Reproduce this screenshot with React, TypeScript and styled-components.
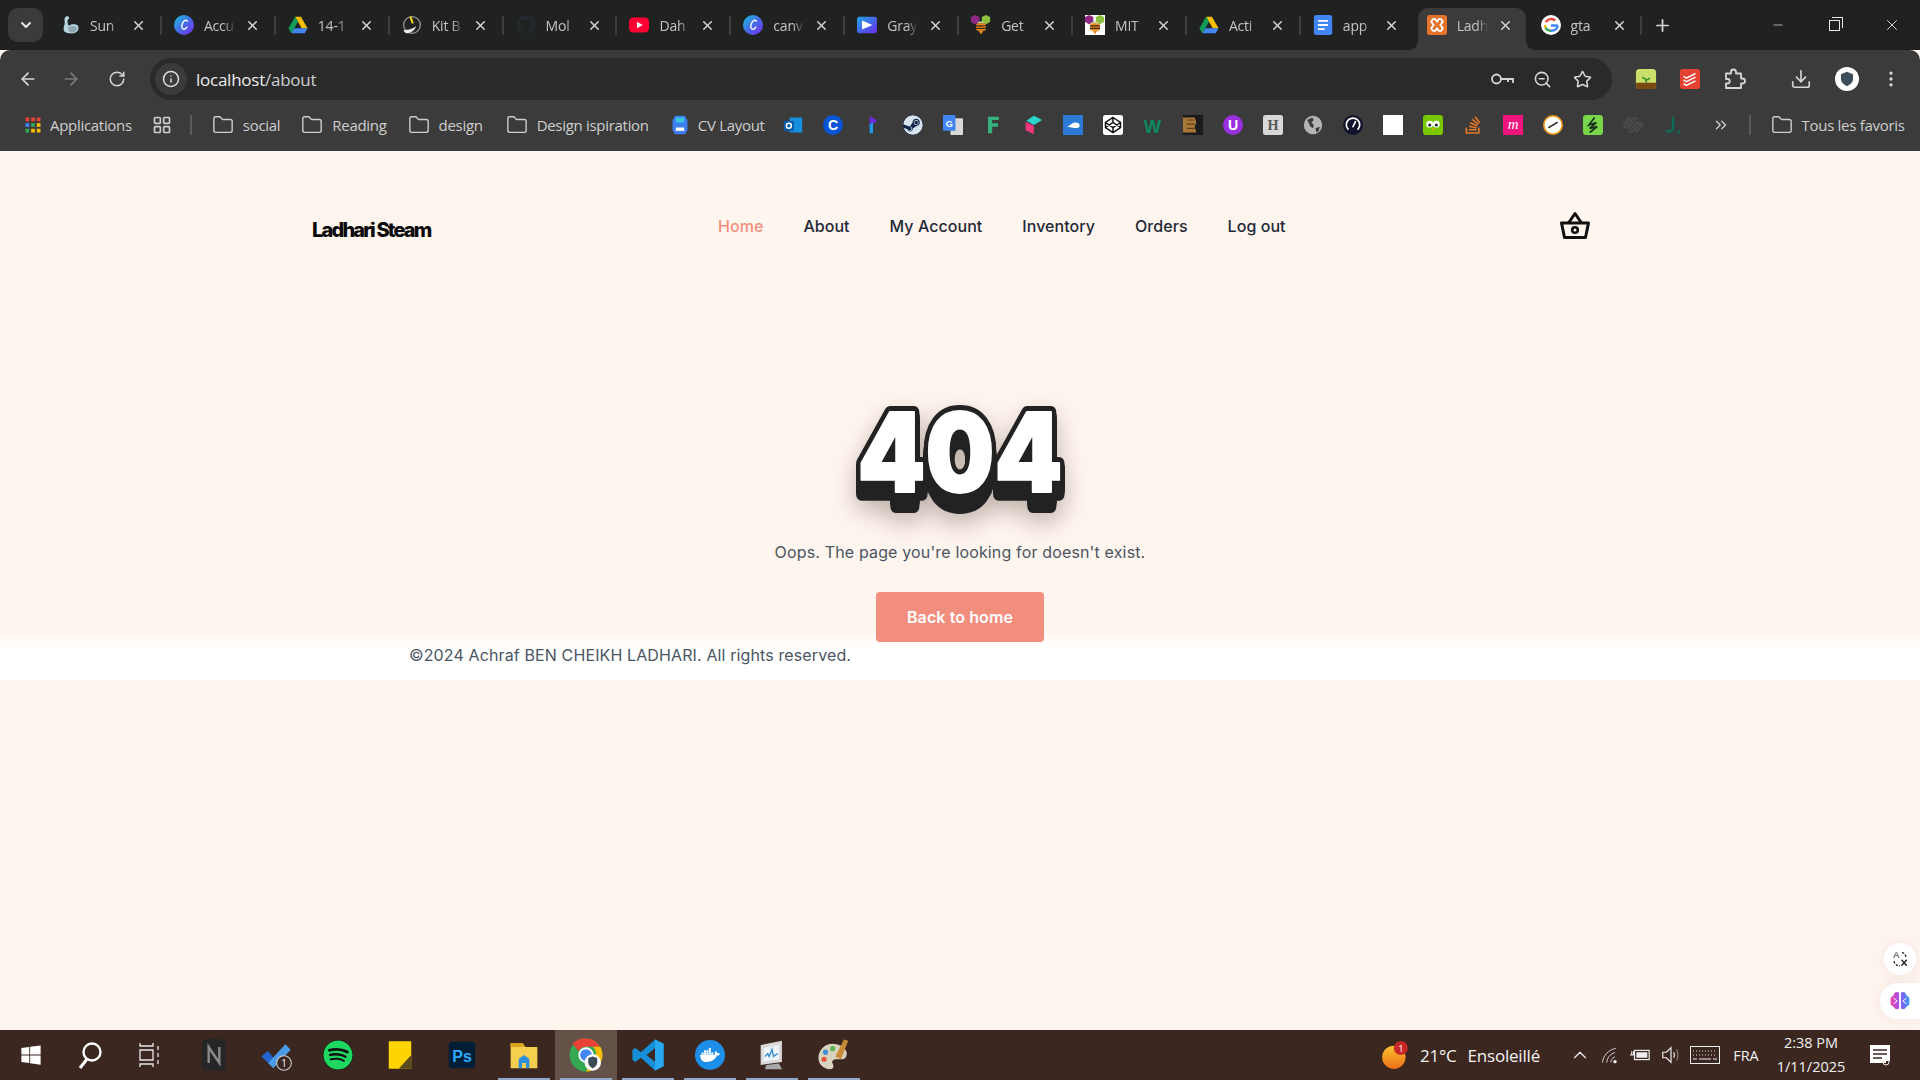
import { ReactNode } from "react";
import styled, { createGlobalStyle } from "styled-components";
import {
  ArrowLeft, ArrowRight, RotateCw, Info, ZoomOut, Star, Download,
  EllipsisVertical, Folder, Plus, X, Minus, ChevronDown, ChevronUp, LayoutGrid, ChevronsRight,
} from "lucide-react";
import { FaGithub, FaSteam, FaSpotify, FaDocker, FaStackOverflow, FaWindows, FaSquarespace } from "react-icons/fa";

const GlobalStyle = createGlobalStyle`
  html, body { margin: 0; padding: 0; height: 100%; background: #fff5ef; }
  #root { height: 100%; }
  * { box-sizing: border-box; }
`;

const uiFont = `"Open Sans", "Noto Sans", sans-serif`;
const pageFont = `Inter, "Liberation Sans", sans-serif`;

const Screen = styled.div`
  width: 1920px;
  height: 1080px;
  display: flex;
  flex-direction: column;
  overflow: hidden;
  position: relative;
  background: #fff5ef;
`;

/* browser chrome */
const TabStrip = styled.div`
  height: 50px;
  flex: none;
  background: #202221;
  display: flex;
  padding: 8px 0 0 8px;
  font-family: ${uiFont};
`;
const TabMenu = styled.div`
  width: 35px;
  height: 34px;
  margin-right: 5px;
  border-radius: 10px;
  background: #3b3b3b;
  color: #e6e6e6;
  display: flex;
  align-items: center;
  justify-content: center;
`;
const Tab = styled.div<{ $active?: boolean; $bare?: boolean }>`
  width: ${(p) => (p.$active ? 107.9 : 113.9)}px;
  height: 42px;
  margin: 0 ${(p) => (p.$active ? 3 : 0)}px;
  padding: 0 0 8px ${(p) => (p.$active ? 9 : 12)}px;
  flex: none;
  display: flex;
  align-items: center;
  position: relative;
  color: #c4c4c4;
  font-size: 14px;
  letter-spacing: -0.2px;
  background: ${(p) => (p.$active ? "#3b3b3b" : "transparent")};
  border-radius: 10px 10px 0 0;
  &::after {
    content: "";
    display: ${(p) => (p.$bare ? "none" : "block")};
    position: absolute;
    right: 0;
    top: 8px;
    width: 2px;
    height: 19px;
    background: #3d3d3d;
  }
  &::before {
    content: "";
    display: ${(p) => (p.$active ? "block" : "none")};
    position: absolute;
    left: -10px;
    right: -10px;
    bottom: 0;
    height: 10px;
    background:
      radial-gradient(circle at 0 0, #202221 10px, #3b3b3b 10.5px) left / 10px 10px no-repeat,
      radial-gradient(circle at 100% 0, #202221 10px, #3b3b3b 10.5px) right / 10px 10px no-repeat;
  }
`;
const TabTitle = styled.span`
  width: 33px;
  margin-left: 10px;
  white-space: nowrap;
  -webkit-mask-image: linear-gradient(90deg, #000 60%, transparent 95%);
  mask-image: linear-gradient(90deg, #000 60%, transparent 95%);
`;
const TabClose = styled.span`
  margin-left: 8px;
  display: flex;
  color: #d4d4d4;
`;
const NewTab = styled.div`
  width: 40px;
  height: 34px;
  color: #d8d8d8;
  display: flex;
  align-items: center;
  justify-content: center;
`;
const WindowButtons = styled.div`
  margin: -8px 0 0 auto;
  display: flex;
  color: #e8e8e8;
`;
const WindowButton = styled.div`
  width: 57px;
  height: 50px;
  display: flex;
  align-items: center;
  justify-content: center;
`;
const RestoreGlyph = styled.div`
  width: 11px;
  height: 11px;
  border: 1px solid #e8e8e8;
  position: relative;
  &::after {
    content: "";
    position: absolute;
    top: -4px;
    right: -4px;
    width: 10px;
    height: 10px;
    border-top: 1px solid #e8e8e8;
    border-right: 1px solid #e8e8e8;
  }
`;

const Toolbar = styled.div`
  height: 50px;
  flex: none;
  background: #3b3b3b;
  border-radius: 10px 10px 0 0;
  display: flex;
  align-items: flex-start;
  padding: 8px 8px 0 10px;
  color: #d6d6d6;
  font-family: ${uiFont};
`;
const NavIcon = styled.div<{ $dim?: boolean; $w?: number }>`
  width: ${(p) => p.$w ?? 44}px;
  height: 42px;
  flex: none;
  display: flex;
  align-items: center;
  justify-content: center;
  color: ${(p) => (p.$dim ? "#7c7c7c" : "#d6d6d6")};
`;
const Omnibox = styled.div`
  width: 1462px;
  height: 42px;
  margin: 0 12px;
  flex: none;
  border-radius: 21px;
  background: #2a2a2a;
  display: flex;
  align-items: center;
  padding: 0 10px 0 5px;
`;
const InfoChip = styled.div`
  width: 32px;
  height: 32px;
  border-radius: 50%;
  background: #3b3b3b;
  display: flex;
  align-items: center;
  justify-content: center;
  color: #e0e0e0;
`;
const Url = styled.div`
  margin-left: 9px;
  font-size: 17px;
  color: #ececec;
  letter-spacing: -0.25px;
  flex: 1;
`;
const UrlPath = styled.span`
  color: #d0d0d0;
`;
const ToolbarRule = styled.div`
  width: 1px;
  height: 24px;
  margin: 9px 12px 0 10px;
  background: #5a5a5a;
`;
const Avatar = styled.div`
  width: 24px;
  height: 24px;
  border-radius: 50%;
  background: #fff;
  display: flex;
  align-items: center;
  justify-content: center;
`;

const Bookmarks = styled.div`
  height: 51px;
  flex: none;
  background: #3b3b3b;
  display: flex;
  align-items: center;
  padding: 0 0 1px 24px;
  color: #cfcfcf;
  font-family: ${uiFont};
  font-size: 15px;
  letter-spacing: -0.3px;
  white-space: nowrap;
`;
const BookmarkItem = styled.div<{ $gap?: number; $inner?: number }>`
  display: flex;
  align-items: center;
  gap: ${(p) => p.$inner ?? 9}px;
  margin-right: ${(p) => p.$gap ?? 21}px;
  flex: none;
`;
const BookmarkRule = styled.div`
  width: 2px;
  height: 20px;
  background: #5a5a5a;
  margin: 0 20px 0 8px;
  flex: none;
`;
const AppsGrid = styled.div`
  width: 30px;
  flex: none;
  display: flex;
  justify-content: flex-start;
`;
const BookmarkIcon = styled.div<{ $shift?: number }>`
  width: 40px;
  height: 24px;
  margin-left: ${(p) => p.$shift ?? 0}px;
  flex: none;
  display: flex;
  align-items: center;
  justify-content: center;
`;

/* page */
const Page = styled.div`
  flex: 1;
  display: flex;
  flex-direction: column;
  min-height: 0;
  font-family: ${pageFont};
`;
const Header = styled.header`
  height: 150px;
  flex: none;
  display: flex;
  align-items: center;
  padding: 0 330px 0 312px;
`;
const Logo = styled.div`
  width: 120px;
  flex: none;
  padding-top: 8px;
  font-size: 20px;
  font-weight: 800;
  letter-spacing: -1.8px;
  color: #0b0b0b;
  white-space: nowrap;
`;
const NavLinks = styled.nav`
  margin-left: 286px;
  display: flex;
  gap: 40px;
`;
const NavLink = styled.a<{ $active?: boolean }>`
  font-size: 16px;
  font-weight: 450;
  letter-spacing: 0.05px;
  color: ${(p) => (p.$active ? "#f28e7d" : "#1f2937")};
  text-decoration: none;
`;
const Cart = styled.div`
  margin: -3px 0 0 auto;
  display: flex;
  color: #111;
`;
const Main = styled.main`
  flex: none;
  display: flex;
  flex-direction: column;
  align-items: center;
  padding-top: 84px;
`;
/* the 404 artwork: rounded outline and a solid drop below it */
const BigCode = styled.svg`
  width: 260px;
  height: 140px;
  display: block;
  overflow: visible;
  filter: drop-shadow(0 4px 0 #222) drop-shadow(0 4px 0 #222) drop-shadow(0 4px 0 #222) drop-shadow(0 3px 0 #222)
    drop-shadow(0 10px 12px rgba(60, 40, 30, 0.32));
`;
const BigCodeText = styled.text<{ $outline: string; $width: number }>`
  font-family: Inter, sans-serif;
  font-weight: 900;
  font-size: 110px;
  text-anchor: middle;
  fill: #fff;
  stroke: ${(p) => p.$outline};
  stroke-width: ${(p) => p.$width}px;
  stroke-linejoin: round;
  paint-order: stroke fill;
`;
const Message = styled.p`
  margin: 15px 0 0;
  font-size: 16px;
  letter-spacing: 0.15px;
  line-height: 24px;
  color: #4b5563;
`;
const BackButton = styled.a`
  margin-top: 28px;
  width: 168px;
  height: 50px;
  border-radius: 4px;
  background: #f28e7d;
  color: #fff;
  font-size: 16px;
  letter-spacing: 0.1px;
  font-weight: 600;
  display: flex;
  align-items: center;
  justify-content: center;
  position: relative;
  z-index: 1;
`;
const Footer = styled.footer`
  margin-top: -11px;
  flex: none;
  height: 49px;
  padding: 12px 0 0 409px;
  background: linear-gradient(#fff5ef, #fff 18px);
  font-size: 16px;
  letter-spacing: 0.12px;
  line-height: 24px;
  color: #4b5563;
`;

/* floating extension buttons, over the page */
const FloatCircle = styled.div`
  position: absolute;
  left: 1884px;
  top: 943px;
  width: 32px;
  height: 32px;
  border-radius: 50%;
  background: #fff;
  display: flex;
  align-items: center;
  justify-content: center;
  box-shadow: 0 0 16px rgba(90, 60, 40, 0.08);
`;
const FloatPill = styled.div`
  position: absolute;
  left: 1880px;
  top: 983px;
  width: 40px;
  height: 36px;
  padding-left: 9px;
  border-radius: 18px 0 0 18px;
  background: #fff;
  display: flex;
  align-items: center;
  box-shadow: 0 0 16px rgba(90, 60, 40, 0.08);
`;

/* windows taskbar */
const Taskbar = styled.div`
  height: 50px;
  flex: none;
  background: #3b2720;
  display: flex;
  align-items: center;
  color: #fff;
  font-family: ${uiFont};
`;
const TaskButton = styled.div<{ $open?: boolean; $current?: boolean; $w?: number }>`
  width: ${(p) => p.$w ?? 62}px;
  height: 50px;
  flex: none;
  display: flex;
  align-items: center;
  justify-content: center;
  position: relative;
  background: ${(p) => (p.$current ? "#645249" : "transparent")};
  &::after {
    content: "";
    display: ${(p) => (p.$open ? "block" : "none")};
    position: absolute;
    left: 5px;
    right: 5px;
    bottom: 0;
    height: 2px;
    background: #90a7c9;
  }
`;
const TaskSpacer = styled.div`
  width: 3px;
  flex: none;
`;
const Tray = styled.div`
  margin-left: auto;
  padding-right: 17px;
  display: flex;
  align-items: center;
  height: 50px;
`;
const Weather = styled.div`
  display: flex;
  align-items: center;
  gap: 11px;
  margin-right: 25px;
  font-size: 17px;
  letter-spacing: -0.2px;
  color: #f2f2f2;
`;
const TrayIcon = styled.div<{ $w?: number }>`
  width: ${(p) => p.$w ?? 30}px;
  display: flex;
  justify-content: center;
  flex: none;
  color: #e8e8e8;
`;
const Lang = styled.div`
  width: 38px;
  margin-left: 3px;
  text-align: center;
  font-size: 14.5px;
  color: #f0f0f0;
`;
const Clock = styled.div`
  width: 92px;
  text-align: center;
  font-size: 14.5px;
  line-height: 24px;
  color: #f0f0f0;
`;
const Notify = styled.div`
  width: 46px;
  display: flex;
  justify-content: center;
`;

type SvgProps = { children: ReactNode; size?: number };
const Ico = ({ children, size = 20 }: SvgProps) => (
  <svg width={size} height={size} viewBox="0 0 24 24" fill="none" style={{ flex: "none", display: "block" }}>
    {children}
  </svg>
);

const Canva = () => (
  <Ico>
    <defs>
      <linearGradient id="canvaG" x1="0" y1="0" x2="1" y2="1">
        <stop offset="0" stopColor="#18c5d8" />
        <stop offset="0.55" stopColor="#4a63ea" />
        <stop offset="1" stopColor="#7b2ff0" />
      </linearGradient>
    </defs>
    <circle cx="12" cy="12" r="12" fill="url(#canvaG)" />
    <path d="M16 7.5c-.6-2-3-1.5-4.6.5-2 2.5-3 7.5-.8 8.8 1.6.9 3.6-.6 4.8-2.3" stroke="#fff" strokeWidth="1.7" strokeLinecap="round" />
  </Ico>
);
const Drive = () => (
  <Ico>
    <path d="M8.5 2h7l8 14h-7z" fill="#fbbc04" />
    <path d="M8.5 2 .5 16l3.5 6 8-14z" fill="#0f9d58" />
    <path d="M4 22h16l3.5-6H7.5z" fill="#4285f4" />
  </Ico>
);
const Arm = () => (
  <Ico>
    <path d="M7 2c2-1 4 0 4 1.5S9 5 9 7s.5 5 1.5 6c2-2 8-3 11 0 2 3 0 8-5 9-5 .5-10-1-11-2-2-3-1-6 0-9S4 4 7 2z" fill="#b8d6e2" />
    <path d="M10 15c2-2 7-2.5 10-.5 1 2-.5 6-4.5 6.5S9 19 10 15z" fill="#8ea7b2" />
  </Ico>
);
const Kit = () => (
  <Ico>
    <circle cx="12" cy="12" r="10" stroke="#9a9a9a" strokeWidth="1.5" />
    <path d="M10 2l3 8" stroke="#f5d90a" strokeWidth="2.5" />
    <path d="M2 18c5 0 12-1 15-5-1 5-6 9-11 9-2 0-4-2-4-4z" fill="#e9e9e9" />
  </Ico>
);
const Youtube = () => (
  <Ico>
    <rect y="3" width="24" height="18" rx="5" fill="#ff0033" />
    <path d="M9.5 8l7 4-7 4z" fill="#fff" />
  </Ico>
);
const Gray = () => (
  <Ico>
    <defs>
      <linearGradient id="grayG" x1="0" y1="0" x2="1" y2="1">
        <stop offset="0" stopColor="#1da6e8" />
        <stop offset="1" stopColor="#6a2be8" />
      </linearGradient>
    </defs>
    <rect x="0" y="2" width="24" height="20" rx="3" fill="url(#grayG)" />
    <path d="M6 6.5 18.5 12 6 17.5z" fill="#fff" />
  </Ico>
);
const Bee = ({ boxed }: { boxed?: boolean }) => (
  <Ico>
    {boxed && <rect width="24" height="24" fill="#fff" />}
    <path d="M5 0l5 2.5v6L5 11 0 8.5v-6z" fill="#8e2a86" />
    <path d="M18 0l5 2.5v6L18 11l-5-2.5v-6z" fill="#8ebf3f" />
    <path d="M7 10c2-3 8-3 10 0z" fill="#b7d9a0" />
    <rect x="6" y="10" width="12" height="9" rx="3" fill="#f08a1e" />
    <path d="M6 13h12M6 16h12" stroke="#3a2a1a" strokeWidth="1.3" />
    <path d="M9 19l3 4 3-4z" fill="#f08a1e" />
  </Ico>
);
const Docs = () => (
  <Ico>
    <rect x="1" width="22" height="24" rx="3" fill="#4285f4" />
    <path d="M6 7h12M6 12h12M6 17h8" stroke="#fff" strokeWidth="2.2" />
  </Ico>
);
const Xampp = () => (
  <Ico>
    <rect width="24" height="24" rx="3" fill="#e5732a" />
    <path d="M7 5h3l2 3 2-3h3l2 3-3 4 3 4-2 3h-3l-2-3-2 3H7l-2-3 3-4-3-4z" stroke="#fff" strokeWidth="2.2" strokeLinejoin="round" />
  </Ico>
);
const GoogleG = () => (
  <Ico>
    <circle cx="12" cy="12" r="12" fill="#fff" />
    <path d="M12 12.5h8M20 12.5c0 3-2.5 6.3-8 6.3" stroke="#4285f4" strokeWidth="3" />
    <path d="M5.8 8.5A7.5 7.5 0 0 1 17 6.5" stroke="#ea4335" strokeWidth="3" />
    <path d="M5 12c0 1 .1 2 .6 3.5" stroke="#fbbc04" strokeWidth="3" />
    <path d="M5.5 15.5A7.5 7.5 0 0 0 12 18.8" stroke="#34a853" strokeWidth="3" />
  </Ico>
);
const FavFolder = () => <Folder size={22} strokeWidth={1.5} color="#cfcfcf" style={{ flex: "none" }} />;
const Letter = ({ bg, fg, ch, round, font = "Liberation Sans" }: { bg: string; fg: string; ch: string; round?: boolean; font?: string }) => (
  <Ico>
    <rect width="24" height="24" rx={round ? 12 : 3} fill={bg} />
    <text x="12" y="18" textAnchor="middle" fontFamily={font} fontWeight="700" fontSize="17" fill={fg}>
      {ch}
    </text>
  </Ico>
);
const BasketIcon = () => (
  <svg width="30" height="28" viewBox="0 0 30 28" fill="none" stroke="currentColor" style={{ display: "block" }}>
    <path d="M1.5 12h27l-3 14.5h-21z" strokeWidth="3" strokeLinejoin="round" />
    <path d="M8.5 12 15 2.5 21.5 12" strokeWidth="3" strokeLinejoin="round" />
    <circle cx="15" cy="19" r="2.8" strokeWidth="2.6" />
  </svg>
);
const KeyIcon = () => (
  <svg width="24" height="16" viewBox="0 0 24 16" fill="none" stroke="currentColor" strokeWidth="1.8" style={{ display: "block" }}>
    <circle cx="6.5" cy="8" r="4.5" />
    <path d="M11 8h12v4M18 8v3" />
  </svg>
);
const PuzzleIcon = () => (
  <Ico size={24}>
    <path d="M4 6.5h5V5a2.5 2.5 0 0 1 5 0v1.5h5v5h1.5a2.5 2.5 0 0 1 0 5H19V21H4v-4.5h1.5a2 2 0 0 0 0-4.5H4z" stroke="#d6d6d6" strokeWidth="1.8" strokeLinejoin="round" />
  </Ico>
);

const tabs = [
  { icon: <Arm />, title: "Sun" },
  { icon: <Canva />, title: "Accu" },
  { icon: <Drive />, title: "14-1" },
  { icon: <Kit />, title: "Kit B" },
  { icon: <FaGithub size={20} color="#24292e" />, title: "Mol" },
  { icon: <Youtube />, title: "Dah" },
  { icon: <Canva />, title: "canv" },
  { icon: <Gray />, title: "Gray" },
  { icon: <Bee />, title: "Get" },
  { icon: <Bee boxed />, title: "MIT" },
  { icon: <Drive />, title: "Acti" },
  { icon: <Docs />, title: "app" },
  { icon: <Xampp />, title: "Ladh", active: true },
  { icon: <GoogleG />, title: "gta" },
];

const bookmarkIcons: ReactNode[] = [
  <Ico key="outlook">
    <rect x="8" y="3" width="15" height="18" fill="#1490df" />
    <rect x="1" y="7" width="12" height="12" fill="#0a5cab" />
    <circle cx="7" cy="13" r="3" stroke="#fff" strokeWidth="1.8" />
  </Ico>,
  <Letter key="c" bg="#0a55d6" fg="#fff" ch="C" round />,
  <Ico key="p">
    <path d="M8 1l9 6-9 7z" fill="#6c2bd9" />
    <path d="M8 11l4-2v13H8z" fill="#1d9bf0" />
  </Ico>,
  <FaSteam key="steam" size={20} color="#d6e4f0" style={{ background: "#13294b", borderRadius: "50%" }} />,
  <Ico key="gt">
    <rect x="9" y="4" width="15" height="20" rx="1" fill="#d9d9d9" />
    <rect width="15" height="19" rx="1" fill="#4285f4" />
    <text x="7.5" y="14" textAnchor="middle" fontFamily="Liberation Sans" fontWeight="700" fontSize="11" fill="#fff">G</text>
  </Ico>,
  <Ico key="f">
    <path d="M6 2h13v4h-8v4h7v4h-7v8H6z" fill="#35b07f" />
  </Ico>,
  <Ico key="cube">
    <path d="M13 1l10 5-10 6-9-5z" fill="#2bd4cf" />
    <path d="M3 8l10 5v10L3 18z" fill="#f0357b" />
  </Ico>,
  <Ico key="bluebox">
    <rect width="24" height="24" fill="#2b7bd6" />
    <path d="M4 14c4 0 5-4 10-5 3-.5 6 1 6 3.5S17 16 14 15.5c-3 0-4-1-10-1.5z" fill="#fff" />
  </Ico>,
  <Ico key="codepen">
    <rect width="24" height="24" rx="3" fill="#fff" />
    <path d="M12 3l9 6v6l-9 6-9-6V9zM12 3v6m0 6v6M3 9l9 6 9-6M3 15l9-6 9 6" stroke="#111" strokeWidth="1.8" />
  </Ico>,
  <Ico key="w3">
    <text x="11" y="21" textAnchor="middle" fontFamily="Liberation Sans" fontWeight="700" fontSize="22" fill="#0b8a5e">W</text>
  </Ico>,
  <Ico key="brown">
    <rect width="24" height="24" fill="#1b1b1b" />
    <path d="M0 3h14l2 6-2 5 2 7H0z" fill="#a87838" />
    <path d="M5 6h8M4 11h10M5 16h9" stroke="#5c3d1a" strokeWidth="1.4" />
  </Ico>,
  <Letter key="u" bg="#9a2fe0" fg="#fff" ch="U" round />,
  <Letter key="h" bg="#d8d8d8" fg="#555" ch="H" font="Liberation Serif" />,
  <Ico key="globe">
    <circle cx="12" cy="12" r="11" fill="#b4b4b4" />
    <path d="M5 6l6-3 2 3-3 3 3 3-1 4-3-2-2-4zM15 16l5-2-1 5-3 2z" fill="#3b3b3b" />
  </Ico>,
  <Ico key="gauge">
    <circle cx="12" cy="12" r="12" fill="#12152b" />
    <path d="M6 17a8 8 0 1 1 12 0" stroke="#fff" strokeWidth="2" strokeLinecap="round" />
    <path d="M12 14l3-6" stroke="#fff" strokeWidth="2" strokeLinecap="round" />
  </Ico>,
  <Ico key="white">
    <rect width="24" height="24" fill="#fff" />
  </Ico>,
  <Ico key="owl">
    <rect width="24" height="24" rx="4" fill="#78c800" />
    <circle cx="8" cy="11" r="4" fill="#fff" />
    <circle cx="16" cy="11" r="4" fill="#fff" />
    <circle cx="8" cy="12" r="1.8" fill="#222" />
    <circle cx="16" cy="12" r="1.8" fill="#222" />
    <path d="M10 16h4l-2 3z" fill="#f5a300" />
  </Ico>,
  <FaStackOverflow key="so" size={20} color="#e87922" />,
  <Ico key="m">
    <rect width="24" height="24" fill="#f0147d" />
    <text x="12" y="17" textAnchor="middle" fontFamily="Liberation Serif" fontStyle="italic" fontSize="18" fill="#fff">m</text>
  </Ico>,
  <Ico key="clock">
    <circle cx="12" cy="12" r="11" fill="#fff" stroke="#f29d1e" strokeWidth="2" />
    <path d="M7 15l10-6" stroke="#333" strokeWidth="1.8" strokeLinecap="round" />
  </Ico>,
  <Ico key="bolt">
    <rect width="24" height="24" rx="4" fill="#79d64a" />
    <path d="M14 3L7 12l9-3-8 7 9-2-9 7" stroke="#163016" strokeWidth="2" />
  </Ico>,
  <FaSquarespace key="sq" size={20} color="#4c4c4c" />,
  <Ico key="j">
    <path d="M12 2v14c0 4-5 5-8 2" stroke="#0d6b57" strokeWidth="3" />
    <circle cx="19" cy="20" r="2" fill="#0d6b57" />
  </Ico>,
];

const links = ["Home", "About", "My Account", "Inventory", "Orders", "Log out"];

const Brain = () => (
  <Ico size={22}>
    <defs>
      <linearGradient id="brainG" x1="0" y1="0" x2="1" y2="0">
        <stop offset="0" stopColor="#f042a8" />
        <stop offset="0.5" stopColor="#9a55ee" />
        <stop offset="1" stopColor="#2f9bf4" />
      </linearGradient>
    </defs>
    <path d="M11 3C8 1 5 3 5 6 2 7 1 10 2 12c-1 3 1 6 3 6 1 3 4 4 6 2zM13 3c3-2 6 0 6 3 3 1 4 4 3 6 1 3-1 6-3 6-1 3-4 4-6 2z" fill="url(#brainG)" />
    <path d="M5 9l4 3-4 3M19 9l-4 3 4 3" stroke="#fff" strokeWidth="1" />
  </Ico>
);

const BigIcon = {
  notion: (
    <Ico size={32}>
      <rect x="3" width="18" height="24" rx="4" fill="#262626" />
      <path d="M8 18V6l8 12V6" stroke="#8a8a8a" strokeWidth="1.8" />
    </Ico>
  ),
  todo: (
    <Ico size={32}>
      <path d="M1 13l5-4 4 5-4 4z" fill="#2564cf" />
      <path d="M6 18L19 4l4 4-13 14z" fill="#4a9be8" />
      <circle cx="18" cy="18" r="5.5" fill="#3b2720" stroke="#cfcfcf" strokeWidth="0.8" />
      <text x="18" y="21" textAnchor="middle" fontFamily="Open Sans" fontSize="8" fill="#eee">1</text>
    </Ico>
  ),
  notes: (
    <Ico size={30}>
      <path d="M3 1h18v22H3z" fill="#ffd400" />
      <path d="M21 12v11H11z" fill="#5a4a20" />
    </Ico>
  ),
  ps: (
    <Ico size={32}>
      <rect x="2" y="2" width="20" height="20" rx="3" fill="#001e36" />
      <text x="12" y="17" textAnchor="middle" fontFamily="Liberation Sans" fontWeight="700" fontSize="12" fill="#31a8ff">Ps</text>
    </Ico>
  ),
  files: (
    <Ico size={32}>
      <path d="M2 3h9l2 3h9v16H2z" fill="#f6cf4f" />
      <path d="M2 3h9l2 3H2z" fill="#d9a520" />
      <path d="M8 22v-7l4-3 4 3v7h-2.5v-4h-3v4z" fill="#2f8fd8" />
    </Ico>
  ),
  chrome: (
    <Ico size={36}>
      <circle cx="12" cy="12" r="11" fill="#34a853" />
      <path d="M12 1a11 11 0 0 1 9.5 5.5H12a5.5 5.5 0 0 0-5 3L3 4.5A11 11 0 0 1 12 1z" fill="#ea4335" />
      <path d="M21.5 6.5A11 11 0 0 1 12 23l5-8a5.5 5.5 0 0 0-.5-8.5z" fill="#fbbc04" />
      <circle cx="12" cy="12" r="4.5" fill="#4285f4" stroke="#fff" strokeWidth="1.2" />
      <circle cx="16.5" cy="17" r="5.5" fill="#fff" />
      <path d="M16.5 13l3 1v3c0 2-1.5 3-3 4-1.5-1-3-2-3-4v-3z" fill="#3b4a57" />
    </Ico>
  ),
  vscode: (
    <Ico size={34}>
      <path d="M17 1l6 3v16l-6 3L7 14l-4 3-2-1.5v-7L3 7l4 3z" fill="#1590d8" />
      <path d="M17 7l-6 5 6 5z" fill="#3b2720" />
      <path d="M17 1l6 3v16l-6 3z" fill="#27a8ef" />
    </Ico>
  ),
  monitor: (
    <Ico size={34}>
      <path d="M4 5l15-3v15L4 19z" fill="#d9d9d9" />
      <path d="M6 7l11-2v10L6 17z" fill="#eef3f7" />
      <path d="M7 13l2-2 1 2 2-5 1 5 3-2" stroke="#3c8fd0" strokeWidth="1" />
      <path d="M8 19l9-1 2 4H7z" fill="#a8a8a8" />
    </Ico>
  ),
  paint: (
    <Ico size={34}>
      <path d="M11 4C5 4 1 9 1 14s4 8 8 8c3 0 3-2 2-4s1-3 3-3h4c2 0 3-2 3-4 0-4-5-7-10-7z" fill="#d8d3bf" />
      <circle cx="6" cy="10" r="1.8" fill="#3c8fd0" />
      <circle cx="11" cy="7.5" r="1.8" fill="#5ab552" />
      <circle cx="5" cy="15" r="1.8" fill="#e8503a" />
      <path d="M13 13l6-12 3 1-5 13z" fill="#c98a3a" />
    </Ico>
  ),
};

const Wifi = () => (
  <Ico size={20}>
    <path d="M3 21C4 12 10 6 19 4M8 21c1-6 4-10 10-12M13 21c0-2 1-5 5-7" stroke="#cfcfcf" strokeWidth="1.2" />
    <circle cx="18" cy="20" r="2" fill="#fff" />
  </Ico>
);
const Battery = () => (
  <Ico size={22}>
    <rect x="6" y="7" width="16" height="10" stroke="#eee" strokeWidth="1.3" />
    <rect x="8" y="9" width="12" height="6" fill="#eee" />
    <path d="M1 12h5M3 8v4M5 8v4" stroke="#eee" strokeWidth="1.3" />
  </Ico>
);
const Speaker = () => (
  <Ico size={22}>
    <path d="M3 9h4l5-5v16l-5-5H3z" stroke="#eee" strokeWidth="1.3" />
    <path d="M15 9c1 2 1 4 0 6" stroke="#eee" strokeWidth="1.3" />
    <path d="M18 6c2 4 2 8 0 12" stroke="#8a7a72" strokeWidth="1.3" />
  </Ico>
);
const Keyboard = () => (
  <svg width="30" height="18" viewBox="0 0 30 18" fill="none" style={{ display: "block" }}>
    <rect x=".5" y=".5" width="29" height="17" stroke="#eee" />
    <path d="M3 5h24M3 9h24" stroke="#ddd" strokeDasharray="1 2" />
    <path d="M3 13h4M9 13h12M23 13h4" stroke="#eee" />
  </svg>
);
const Notification = () => (
  <svg width="22" height="22" viewBox="0 0 22 22" style={{ display: "block" }}>
    <path d="M1 1h20v16h-4v2H1z" fill="#fff" />
    <path d="M4 6h14M4 10h14M4 14h9" stroke="#3b2720" strokeWidth="1.3" />
    <circle cx="17" cy="18" r="3" fill="none" stroke="#eee" />
  </svg>
);

export default function App() {
  return (
    <Screen>
      <GlobalStyle />
      <TabStrip>
        <TabMenu>
          <ChevronDown size={16} strokeWidth={3} />
        </TabMenu>
        {tabs.map((t, i) => (
          <Tab key={i} $active={t.active} $bare={t.active || tabs[i + 1]?.active}>
            {t.icon}
            <TabTitle>{t.title}</TabTitle>
            <TabClose>
              <X size={15} strokeWidth={2.4} />
            </TabClose>
          </Tab>
        ))}
        <NewTab>
          <Plus size={19} strokeWidth={2.2} />
        </NewTab>
        <WindowButtons>
          <WindowButton>
            <Minus size={14} strokeWidth={1.2} />
          </WindowButton>
          <WindowButton>
            <RestoreGlyph />
          </WindowButton>
          <WindowButton>
            <X size={18} strokeWidth={1.2} />
          </WindowButton>
        </WindowButtons>
      </TabStrip>

      <Toolbar>
        <NavIcon $w={36}>
          <ArrowLeft size={20} />
        </NavIcon>
        <NavIcon $dim $w={50}>
          <ArrowRight size={20} />
        </NavIcon>
        <NavIcon $w={42}>
          <RotateCw size={18} />
        </NavIcon>
        <Omnibox>
          <InfoChip>
            <Info size={18} />
          </InfoChip>
          <Url>
            localhost<UrlPath>/about</UrlPath>
          </Url>
          <NavIcon $w={40}>
            <KeyIcon />
          </NavIcon>
          <NavIcon $w={40}>
            <ZoomOut size={19} />
          </NavIcon>
          <NavIcon $w={40}>
            <Star size={19} />
          </NavIcon>
        </Omnibox>
        <NavIcon>
          <Ico size={22}>
            <rect x="1" y="1" width="22" height="22" rx="4" fill="#cbe06b" />
            <path d="M1 16h22v3a4 4 0 0 1-4 4H5a4 4 0 0 1-4-4z" fill="#7a4a12" />
            <path d="M12 16v-4M12 12c-2 0-3-1-4-2M12 13c2 0 3-1 4-2" stroke="#3a8f2a" strokeWidth="2" />
          </Ico>
        </NavIcon>
        <NavIcon>
          <Ico size={22}>
            <rect x="1" y="1" width="22" height="22" rx="3" fill="#e44332" />
            <path d="M5 9l3 2 10-5M5 13l3 2 10-5M5 17l3 2 10-5" stroke="#fff" strokeWidth="1.6" />
          </Ico>
        </NavIcon>
        <NavIcon>
          <PuzzleIcon />
        </NavIcon>
        <ToolbarRule />
        <NavIcon $w={46}>
          <Download size={22} strokeWidth={1.8} />
        </NavIcon>
        <NavIcon $w={46}>
          <Avatar>
            <Ico size={16}>
              <path d="M12 1l9 4v7c0 5-4 8-9 11-5-3-9-6-9-11V5z" fill="#3c4d5c" />
            </Ico>
          </Avatar>
        </NavIcon>
        <NavIcon $w={42}>
          <EllipsisVertical size={20} />
        </NavIcon>
      </Toolbar>

      <Bookmarks>
        <BookmarkItem $gap={20} $inner={8}>
          <Ico size={18}>
            <path d="M2 2h5v5H2z" fill="#ea4335" />
            <path d="M9.5 2h5v5h-5z" fill="#ea4335" />
            <path d="M17 2h5v5h-5z" fill="#ea4335" />
            <path d="M2 9.5h5v5H2z" fill="#4285f4" />
            <path d="M9.5 9.5h5v5h-5z" fill="#34a853" />
            <path d="M17 9.5h5v5h-5z" fill="#fbbc04" />
            <path d="M2 17h5v5H2z" fill="#34a853" />
            <path d="M9.5 17h5v5h-5z" fill="#fbbc04" />
            <path d="M17 17h5v5h-5z" fill="#fbbc04" />
          </Ico>
          Applications
        </BookmarkItem>
        <AppsGrid>
          <LayoutGrid size={20} strokeWidth={2} />
        </AppsGrid>
        <BookmarkRule />
        <BookmarkItem>
          <FavFolder />
          social
        </BookmarkItem>
        <BookmarkItem>
          <FavFolder />
          Reading
        </BookmarkItem>
        <BookmarkItem $gap={23}>
          <FavFolder />
          design
        </BookmarkItem>
        <BookmarkItem>
          <FavFolder />
          Design ispiration
        </BookmarkItem>
        <BookmarkItem $gap={8} $inner={8}>
          <Ico>
            <path d="M6 1h12l3 6v11l-3 5H6l-3-5V7z" fill="#3f7df0" />
            <path d="M7 3h10v6H7z" fill="#39c6e8" />
            <path d="M7 15h10v4H7z" fill="#fff" />
          </Ico>
          CV Layout
        </BookmarkItem>
        {bookmarkIcons.map((icon, i) => (
          <BookmarkIcon key={i}>{icon}</BookmarkIcon>
        ))}
        <BookmarkIcon $shift={8}>
          <ChevronsRight size={18} strokeWidth={1.8} />
        </BookmarkIcon>
        <BookmarkRule />
        <BookmarkItem>
          <FavFolder />
          Tous les favoris
        </BookmarkItem>
      </Bookmarks>

      <Page>
        <Header>
          <Logo>Ladhari Steam</Logo>
          <NavLinks>
            {links.map((l, i) => (
              <NavLink key={l} $active={i === 0}>
                {l}
              </NavLink>
            ))}
          </NavLinks>
          <Cart>
            <BasketIcon />
          </Cart>
        </Header>
        <Main>
          <BigCode viewBox="0 0 260 140" role="img" aria-label="404">
            <g transform="translate(130 107) scale(0.88 1)">
              <BigCodeText $outline="#222" $width={12}>404</BigCodeText>
              <BigCodeText $outline="#fff" $width={2} aria-hidden="true">404</BigCodeText>
            </g>
          </BigCode>
          <Message>Oops. The page you're looking for doesn't exist.</Message>
          <BackButton>Back to home</BackButton>
        </Main>
        <Footer>©2024 Achraf BEN CHEIKH LADHARI. All rights reserved.</Footer>
      </Page>

      <FloatCircle>
        <Ico size={18}>
          <text x="7" y="11" textAnchor="middle" fontFamily="Liberation Sans" fontSize="12" fill="#222">A</text>
          <path d="M4 15c1 5 5 6 8 6M20 9c-1-4-4-6-7-6" stroke="#222" strokeWidth="1.8" strokeDasharray="3 2" />
          <path d="M14 13l7 8M21 13l-7 8" stroke="#222" strokeWidth="1.8" />
        </Ico>
      </FloatCircle>
      <FloatPill>
        <Brain />
      </FloatPill>

      <Taskbar>
        <TaskButton>
          <FaWindows size={22} color="#fff" />
        </TaskButton>
        <TaskButton $w={56}>
          <svg width="30" height="30" viewBox="0 0 30 30" fill="none">
            <circle cx="17" cy="12" r="8.5" stroke="#fff" strokeWidth="2.4" />
            <path d="M12 19l-7 9" stroke="#fff" strokeWidth="3" />
          </svg>
        </TaskButton>
        <TaskButton>
          <svg width="22" height="24" viewBox="0 0 22 24" fill="none" stroke="#e8e8e8" strokeWidth="1.3">
            <path d="M2 0v3h13V0M2 24v-3h13v3M2 7h13v10H2zM20 3v4M20 10v4M20 17v4" />
          </svg>
        </TaskButton>
        <TaskSpacer />
        <TaskButton>{BigIcon.notion}</TaskButton>
        <TaskButton>{BigIcon.todo}</TaskButton>
        <TaskButton>
          <FaSpotify size={30} color="#1ed760" style={{ background: "#111", borderRadius: "50%" }} />
        </TaskButton>
        <TaskButton>{BigIcon.notes}</TaskButton>
        <TaskButton>{BigIcon.ps}</TaskButton>
        <TaskButton $open>{BigIcon.files}</TaskButton>
        <TaskButton $open $current>
          {BigIcon.chrome}
        </TaskButton>
        <TaskButton $open>{BigIcon.vscode}</TaskButton>
        <TaskButton $open>
          <FaDocker size={20} color="#fff" style={{ background: "#1d8fe8", borderRadius: "50%", padding: 5, width: 30, height: 30 }} />
        </TaskButton>
        <TaskButton $open>{BigIcon.monitor}</TaskButton>
        <TaskButton $open>{BigIcon.paint}</TaskButton>

        <Tray>
          <Weather>
            <Ico size={28}>
              <defs>
                <linearGradient id="sunG" x1="0" y1="0" x2="0" y2="1">
                  <stop offset="0" stopColor="#f8c22c" />
                  <stop offset="1" stopColor="#ee6f17" />
                </linearGradient>
              </defs>
              <circle cx="11" cy="14" r="10" fill="url(#sunG)" />
              <circle cx="17" cy="6" r="6" fill="#c62828" />
              <text x="17" y="9" textAnchor="middle" fontFamily="Open Sans" fontSize="8" fill="#fff">1</text>
            </Ico>
            <span>21°C</span>
            <span>Ensoleillé</span>
          </Weather>
          <TrayIcon>
            <ChevronUp size={22} strokeWidth={1.4} />
          </TrayIcon>
          <TrayIcon>
            <Wifi />
          </TrayIcon>
          <TrayIcon>
            <Battery />
          </TrayIcon>
          <TrayIcon $w={31}>
            <Speaker />
          </TrayIcon>
          <TrayIcon $w={38}>
            <Keyboard />
          </TrayIcon>
          <Lang>FRA</Lang>
          <Clock>
            2:38 PM
            <br />
            1/11/2025
          </Clock>
          <Notify>
            <Notification />
          </Notify>
        </Tray>
      </Taskbar>
    </Screen>
  );
}
